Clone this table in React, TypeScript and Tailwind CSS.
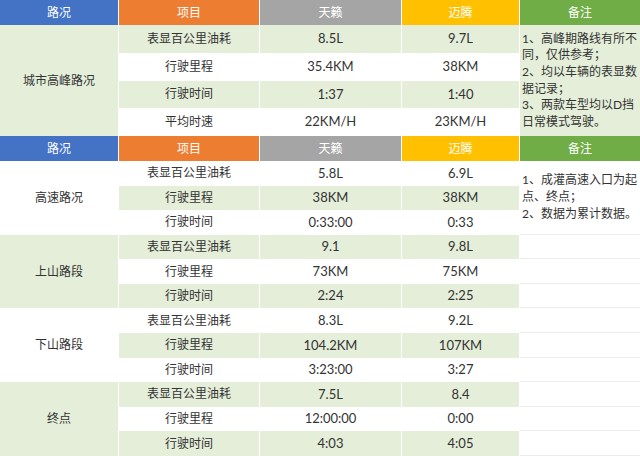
const font = { fontFamily: '"Lato", "Noto Sans CJK SC", sans-serif' };

type Row = { item: string; a: string; b: string };

interface Section {
  name: string;
  rows: Row[];
  nameGreen: boolean;
  firstGreen: boolean;
  rowH: string;
  note?: string[];
  noteGreen?: boolean;
}

const GREEN = "bg-[#e4eed9]";

const sections: Section[] = [
  {
    name: "城市高峰路况",
    nameGreen: true,
    firstGreen: true,
    rowH: "h-[27.75px]",
    noteGreen: true,
    rows: [
      { item: "表显百公里油耗", a: "8.5L", b: "9.7L" },
      { item: "行驶里程", a: "35.4KM", b: "38KM" },
      { item: "行驶时间", a: "1:37", b: "1:40" },
      { item: "平均时速", a: "22KM/H", b: "23KM/H" },
    ],
    note: [
      "1、高峰期路线有所不",
      "同，仅供参考；",
      "2、均以车辆的表显数",
      "据记录；",
      "3、两款车型均以D挡",
      "日常模式驾驶。",
    ],
  },
  {
    name: "高速路况",
    nameGreen: false,
    firstGreen: false,
    rowH: "h-[24.58px]",
    rows: [
      { item: "表显百公里油耗", a: "5.8L", b: "6.9L" },
      { item: "行驶里程", a: "38KM", b: "38KM" },
      { item: "行驶时间", a: "0:33:00", b: "0:33" },
    ],
    note: ["1、成灌高速入口为起", "点、终点；", "2、数据为累计数据。"],
  },
  {
    name: "上山路段",
    nameGreen: true,
    firstGreen: true,
    rowH: "h-[24.58px]",
    rows: [
      { item: "表显百公里油耗", a: "9.1", b: "9.8L" },
      { item: "行驶里程", a: "73KM", b: "75KM" },
      { item: "行驶时间", a: "2:24", b: "2:25" },
    ],
  },
  {
    name: "下山路段",
    nameGreen: false,
    firstGreen: false,
    rowH: "h-[24.58px]",
    rows: [
      { item: "表显百公里油耗", a: "8.3L", b: "9.2L" },
      { item: "行驶里程", a: "104.2KM", b: "107KM" },
      { item: "行驶时间", a: "3:23:00", b: "3:27" },
    ],
  },
  {
    name: "终点",
    nameGreen: true,
    firstGreen: true,
    rowH: "h-[24.58px]",
    rows: [
      { item: "表显百公里油耗", a: "7.5L", b: "8.4" },
      { item: "行驶里程", a: "12:00:00", b: "0:00" },
      { item: "行驶时间", a: "4:03", b: "4:05" },
    ],
  },
];

const Header = () => (
  <div className="flex h-[25px] text-white text-[12px]">
    <div className="w-[119px] bg-[#4472c4] border-r border-white flex items-center justify-center">路况</div>
    <div className="w-[141px] bg-[#ed7d31] border-r border-white flex items-center justify-center">项目</div>
    <div className="w-[142px] bg-[#a5a5a5] border-r border-white flex items-center justify-center">天籁</div>
    <div className="w-[118px] bg-[#ffc000] border-r border-white flex items-center justify-center">迈腾</div>
    <div className="w-[120px] bg-[#70ad47] flex items-center justify-center">备注</div>
  </div>
);

const SectionBlock = ({ s }: { s: Section }) => (
  <div className="flex">
    <div
      className={`w-[119px] border-r border-white flex items-center justify-center text-[12px] ${
        s.nameGreen ? GREEN : "bg-white"
      }`}
    >
      {s.name}
    </div>
    <div className="flex flex-col">
      {s.rows.map((r, i) => {
        const green = (i % 2 === 0) === s.firstGreen;
        return (
          <div key={i} className={`flex ${s.rowH} ${green ? GREEN : "bg-white"}`}>
            <div className="w-[141px] border-r border-white flex items-center justify-center text-[12px]">
              {r.item}
            </div>
            <div className="w-[142px] border-r border-white flex items-center justify-center text-[13px]">
              {r.a}
            </div>
            <div className="w-[118px] border-r border-white flex items-center justify-center text-[13px]">
              {r.b}
            </div>
          </div>
        );
      })}
    </div>
    {s.note ? (
      <div
        className={`w-[120px] flex flex-col justify-center pl-[2px] text-[12px] leading-[16.6px] whitespace-nowrap overflow-hidden ${
          s.noteGreen ? GREEN : "bg-white border-b border-[#ececec]"
        }`}
      >
        {s.note.map((l, i) => (
          <span key={i}>{l}</span>
        ))}
      </div>
    ) : (
      <div className="w-[120px] flex flex-col bg-white">
        {s.rows.map((_, i) => (
          <div key={i} className={`${s.rowH} border-b border-[#ececec]`} />
        ))}
      </div>
    )}
  </div>
);

export default function App() {
  return (
    <div className="w-[640px] h-[456px] overflow-hidden bg-white text-[#333333]" style={font}>
      <Header />
      <SectionBlock s={sections[0]} />
      <Header />
      {sections.slice(1).map((s, i) => (
        <SectionBlock key={i} s={s} />
      ))}
    </div>
  );
}
